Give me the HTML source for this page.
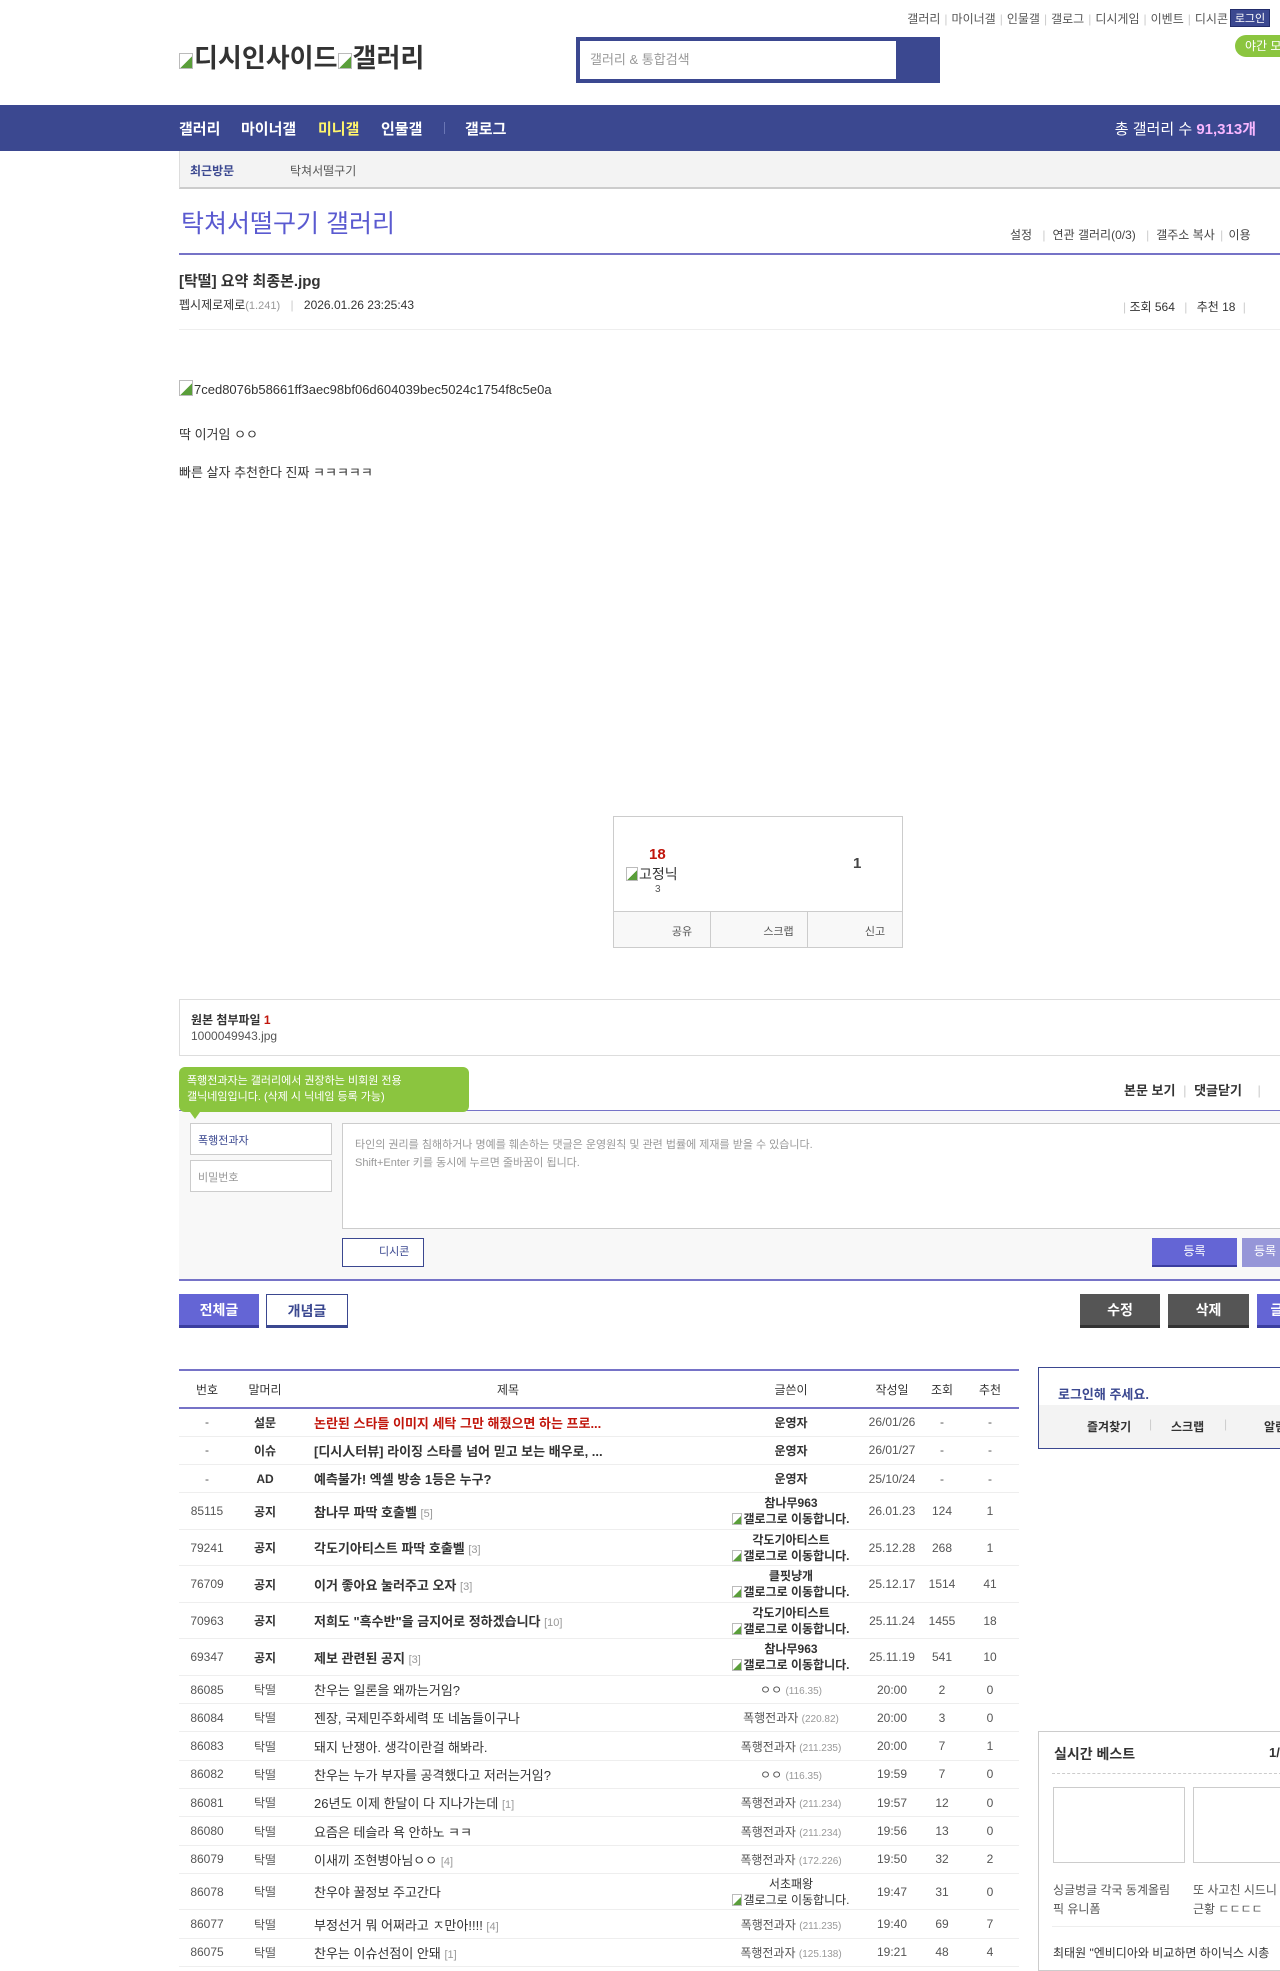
<!DOCTYPE html>
<html><head><meta charset="utf-8">
<style>
*{margin:0;padding:0;box-sizing:border-box}
body{width:1280px;height:1959px;overflow:hidden;background:#fff;font-family:"Liberation Sans","Noto Sans CJK KR",sans-serif;color:#333;position:relative;font-size:13px}
.a{position:absolute;white-space:nowrap}
.bi{display:inline-block;width:14px;height:16px;border:1px solid #bbb;background:linear-gradient(135deg,#fff 55%,#5a9e3a 56%);vertical-align:-2px;margin-right:1px}
.toplinks{font-size:12px;color:#555}
.toplinks span{color:#ccc;margin:0 4px}
.nav{background:#3b4890;top:105px;left:0;width:1280px;height:46px}
.nav b{position:absolute;top:13px;color:#fff;font-size:15px}
table{border-collapse:collapse}
.lst{position:absolute;left:179px;top:1369px;width:840px;border-top:2px solid #7673c7;font-size:12px}
.lst td,.lst th{text-align:center;color:#555;border-bottom:1px solid #eee;padding:0}
.lst th{height:38px;border-bottom:2px solid #7673c7;font-weight:normal;color:#333}
.lst td.t{text-align:left;padding-left:19px;font-size:13px;color:#333}
.lst tr.n td{height:28.3px}
.lst tr.k td{height:36.5px}
.lst td.t b{color:#333}
.lst .rd{color:#c1150b!important}
.ip{color:#999;font-size:10px}
.rp{color:#999;font-size:11px}
.two{line-height:16px;font-size:12px}
.two b{color:#333}
.btn{position:absolute;height:34px;line-height:32px;text-align:center;font-size:14px;font-weight:bold}
</style></head><body>

<div class="a toplinks" style="top:10px;right:52px">갤러리<span>|</span>마이너갤<span>|</span>인물갤<span>|</span>갤로그<span>|</span>디시게임<span>|</span>이벤트<span>|</span>디시콘</div>
<div class="a" style="top:9px;left:1230px;width:40px;height:18px;background:#3b4890;color:#fff;font-size:11px;text-align:center;line-height:18px;border:1px solid #222c6a">로그인</div>
<div class="a" style="top:35px;left:1235px;width:60px;height:22px;background:#8bc53f;border-radius:11px;color:#fff;font-size:12px;line-height:22px;padding-left:10px">야간 모드</div>

<div class="a" style="top:38px;left:179px;font-size:26px;font-weight:bold;color:#333"><span class="bi"></span>디시인사이드<span class="bi"></span>갤러리</div>

<div class="a" style="top:37px;left:576px;width:364px;height:46px;background:#3b4890"></div>
<div class="a" style="top:41px;left:580px;width:316px;height:38px;background:#fff;color:#999;font-size:13px;line-height:38px;padding-left:10px">갤러리 &amp; 통합검색</div>

<div class="a nav">
<b style="left:179px">갤러리</b><b style="left:241px">마이너갤</b><b style="left:318px;color:#fff56b">미니갤</b><b style="left:381px">인물갤</b>
<span style="position:absolute;left:444px;top:17px;width:1px;height:12px;background:#6a76b5"></span>
<b style="left:465px">갤로그</b>
<span style="position:absolute;right:24px;top:13px;color:#fff;font-size:15px">총 갤러리 수 <b style="position:static;color:#f7b6ff">91,313개</b></span>
</div>

<div class="a" style="top:151px;left:179px;width:1101px;height:38px;background:#f3f3f3;border-left:1px solid #ddd;border-bottom:2px solid #ccc"></div>
<div class="a" style="top:162px;left:190px;font-size:12px;font-weight:bold;color:#3b4890">최근방문</div>
<div class="a" style="top:162px;left:290px;font-size:12px;color:#555">탁쳐서떨구기</div>

<div class="a" style="top:204px;left:181px;font-size:25px;color:#5a5ad0">탁쳐서떨구기 갤러리</div>
<div class="a" style="top:226px;left:1010px;font-size:12px;color:#444">설정 <span style="color:#ccc;margin:0 7px">|</span>연관 갤러리(0/3) <span style="color:#ccc;margin:0 7px">|</span>갤주소 복사 <span style="color:#ccc;margin:0 2px">|</span> 이용</div>
<div class="a" style="top:253px;left:179px;width:1101px;height:2px;background:#7673c7"></div>

<div class="a" style="top:270px;left:179px;font-size:15px;font-weight:bold;color:#333">[탁떨] 요약 최종본.jpg</div>
<div class="a" style="top:296px;left:179px;font-size:12px;color:#333">펩시제로제로<span style="color:#999;font-size:11px">(1.241)</span> <span style="color:#ccc;margin:0 7px">|</span> 2026.01.26 23:25:43</div>
<div class="a" style="top:298px;left:1123px;font-size:12px;color:#333"><span style="color:#ccc">|</span> 조회 564 <span style="color:#ccc;margin:0 6px">|</span> 추천 18 <span style="color:#ccc;margin:0 4px">|</span></div>
<div class="a" style="top:294px;left:1304px;width:30px;height:24px;border:1px solid #ccc;border-radius:12px"></div>
<div class="a" style="top:329px;left:179px;width:1101px;height:1px;background:#eee"></div>

<div class="a" style="top:380px;left:179px;font-size:13px;color:#333"><span class="bi"></span>7ced8076b58661ff3aec98bf06d604039bec5024c1754f8c5e0a</div>
<div class="a" style="top:424px;left:179px;font-size:13px">딱 이거임 ㅇㅇ</div>
<div class="a" style="top:462px;left:179px;font-size:13px">빠른 살자 추천한다 진짜 ㅋㅋㅋㅋㅋ</div>

<div class="a" style="top:816px;left:613px;width:290px;height:132px;border:1px solid #ccc"></div>
<div class="a" style="top:911px;left:613px;width:290px;height:37px;border:1px solid #ccc;background:#f8f8f8;font-size:11px;color:#555">
<span style="position:absolute;left:0;width:96px;top:11px;text-align:center;padding-left:40px">공유</span>
<span style="position:absolute;left:96px;top:0;height:35px;width:1px;background:#ccc"></span>
<span style="position:absolute;left:96px;width:97px;top:11px;text-align:center;padding-left:40px">스크랩</span>
<span style="position:absolute;left:193px;top:0;height:35px;width:1px;background:#ccc"></span>
<span style="position:absolute;left:193px;width:96px;top:11px;text-align:center;padding-left:40px">신고</span>
</div>
<div class="a" style="top:846px;left:649px;font-size:15px;font-weight:bold;color:#c1150b">18</div>
<div class="a" style="top:864px;left:626px;font-size:14px;color:#333"><span class="bi" style="width:12px;height:14px"></span>고정닉</div>
<div class="a" style="top:884px;left:655px;font-size:10px;color:#555">3</div>
<div class="a" style="top:855px;left:853px;font-size:15px;font-weight:bold;color:#444">1</div>

<div class="a" style="top:999px;left:179px;width:1101px;height:57px;border:1px solid #ddd;border-right:none"></div>
<div class="a" style="top:1011px;left:191px;font-size:12px;font-weight:bold;color:#333">원본 첨부파일 <span style="color:#c1150b">1</span></div>
<div class="a" style="top:1029px;left:191px;font-size:12px;color:#555">1000049943.jpg</div>

<div class="a" style="top:1110px;left:179px;width:1101px;height:2px;background:#7673c7"></div>
<div class="a" style="top:1111px;left:179px;width:1101px;height:169px;background:#f8f8f8"></div>
<div class="a" style="top:1067px;left:179px;width:290px;height:45px;background:#8bc53f;border-radius:6px;color:#fff;font-size:11px;line-height:16px;padding:6px 0 0 8px">폭행전과자는 갤러리에서 권장하는 비회원 전용<br>갤닉네임입니다. (삭제 시 닉네임 등록 가능)</div>
<div class="a" style="top:1112px;left:190px;border-left:5px solid transparent;border-right:5px solid transparent;border-top:7px solid #8bc53f;width:0;height:0"></div>
<div class="a" style="top:1080px;left:1124px;font-size:13px;font-weight:bold;color:#333">본문 보기 <span style="color:#ccc;font-weight:normal;margin:0 4px">|</span> 댓글닫기 <span style="color:#ccc;font-weight:normal;margin:0 12px">|</span></div>
<div class="a" style="top:1123px;left:190px;width:142px;height:32px;border:1px solid #ccc;background:#fff;font-size:11px;color:#3b4890;padding:8px 7px">폭행전과자</div>
<div class="a" style="top:1160px;left:190px;width:142px;height:32px;border:1px solid #ccc;background:#fff;font-size:11px;color:#999;padding:8px 7px">비밀번호</div>
<div class="a" style="top:1123px;left:342px;width:960px;height:106px;border:1px solid #ccc;background:#fff;font-size:11px;color:#999;padding:12px 12px;line-height:18px">타인의 권리를 침해하거나 명예를 훼손하는 댓글은 운영원칙 및 관련 법률에 제재를 받을 수 있습니다.<br>Shift+Enter 키를 동시에 누르면 줄바꿈이 됩니다.</div>
<div class="a" style="top:1238px;left:342px;width:82px;height:29px;border:1px solid #3b4890;background:#fff;font-size:11px;color:#3b4890;line-height:27px;padding-left:36px">디시콘</div>
<div class="a" style="top:1238px;left:1152px;width:85px;height:29px;background:#6465d5;border-bottom:2px solid #3b3ea0;color:#fff;font-size:12px;text-align:center;line-height:27px">등록</div>
<div class="a" style="top:1238px;left:1242px;width:60px;height:29px;background:#9696d8;color:#fff;font-size:12px;line-height:27px;padding-left:12px">등록</div>
<div class="a" style="top:1279px;left:179px;width:1101px;height:2px;background:#7673c7"></div>

<div class="btn" style="top:1294px;left:179px;width:80px;background:#6465d5;color:#fff;border-bottom:3px solid #3b3ea0">전체글</div>
<div class="btn" style="top:1294px;left:266px;width:82px;background:#fff;color:#3b4890;border:1px solid #3b4890;border-bottom:3px solid #3b4890">개념글</div>
<div class="btn" style="top:1294px;left:1080px;width:80px;background:#555;color:#fff;border-bottom:3px solid #333">수정</div>
<div class="btn" style="top:1294px;left:1168px;width:81px;background:#555;color:#fff;border-bottom:3px solid #333">삭제</div>
<div class="btn" style="top:1294px;left:1257px;width:40px;background:#6465d5;color:#fff;border-bottom:3px solid #3b3ea0">글</div>

<table class="lst">
<colgroup><col style="width:56px"><col style="width:60px"><col style="width:426px"><col style="width:140px"><col style="width:62px"><col style="width:38px"><col style="width:58px"></colgroup>
<tr><th>번호</th><th>말머리</th><th>제목</th><th>글쓴이</th><th>작성일</th><th>조회</th><th>추천</th></tr>
<tr class="n"><td>-</td><td><b style="color:#333">설문</b></td><td class="t"><b class="rd">논란된 스타들 이미지 세탁 그만 해줬으면 하는 프로...</b></td><td><b style="color:#333">운영자</b></td><td>26/01/26</td><td>-</td><td>-</td></tr>
<tr class="n"><td>-</td><td><b style="color:#333">이슈</b></td><td class="t"><b>[디시人터뷰] 라이징 스타를 넘어 믿고 보는 배우로, ...</b></td><td><b style="color:#333">운영자</b></td><td>26/01/27</td><td>-</td><td>-</td></tr>
<tr class="n"><td>-</td><td><b style="color:#333">AD</b></td><td class="t"><b>예측불가! 엑셀 방송 1등은 누구?</b></td><td><b style="color:#333">운영자</b></td><td>25/10/24</td><td>-</td><td>-</td></tr>
<tr class="k"><td>85115</td><td><b style="color:#333">공지</b></td><td class="t"><b>참나무 파딱 호출벨</b> <span class="rp">[5]</span></td><td class="two"><b>참나무963</b><br><b><span class="bi" style="width:10px;height:12px"></span>갤로그로 이동합니다.</b></td><td>26.01.23</td><td>124</td><td>1</td></tr>
<tr class="k"><td>79241</td><td><b style="color:#333">공지</b></td><td class="t"><b>각도기아티스트 파딱 호출벨</b> <span class="rp">[3]</span></td><td class="two"><b>각도기아티스트</b><br><b><span class="bi" style="width:10px;height:12px"></span>갤로그로 이동합니다.</b></td><td>25.12.28</td><td>268</td><td>1</td></tr>
<tr class="k"><td>76709</td><td><b style="color:#333">공지</b></td><td class="t"><b>이거 좋아요 눌러주고 오자</b> <span class="rp">[3]</span></td><td class="two"><b>클핏냥개</b><br><b><span class="bi" style="width:10px;height:12px"></span>갤로그로 이동합니다.</b></td><td>25.12.17</td><td>1514</td><td>41</td></tr>
<tr class="k"><td>70963</td><td><b style="color:#333">공지</b></td><td class="t"><b>저희도 "흑수반"을 금지어로 정하겠습니다</b> <span class="rp">[10]</span></td><td class="two"><b>각도기아티스트</b><br><b><span class="bi" style="width:10px;height:12px"></span>갤로그로 이동합니다.</b></td><td>25.11.24</td><td>1455</td><td>18</td></tr>
<tr class="k"><td>69347</td><td><b style="color:#333">공지</b></td><td class="t"><b>제보 관련된 공지</b> <span class="rp">[3]</span></td><td class="two"><b>참나무963</b><br><b><span class="bi" style="width:10px;height:12px"></span>갤로그로 이동합니다.</b></td><td>25.11.19</td><td>541</td><td>10</td></tr>
<tr class="n"><td>86085</td><td>탁떨</td><td class="t">찬우는 일론을 왜까는거임?</td><td>ㅇㅇ <span class="ip">(116.35)</span></td><td>20:00</td><td>2</td><td>0</td></tr>
<tr class="n"><td>86084</td><td>탁떨</td><td class="t">젠장, 국제민주화세력 또 네놈들이구나</td><td>폭행전과자 <span class="ip">(220.82)</span></td><td>20:00</td><td>3</td><td>0</td></tr>
<tr class="n"><td>86083</td><td>탁떨</td><td class="t">돼지 난쟁아. 생각이란걸 해봐라.</td><td>폭행전과자 <span class="ip">(211.235)</span></td><td>20:00</td><td>7</td><td>1</td></tr>
<tr class="n"><td>86082</td><td>탁떨</td><td class="t">찬우는 누가 부자를 공격했다고 저러는거임?</td><td>ㅇㅇ <span class="ip">(116.35)</span></td><td>19:59</td><td>7</td><td>0</td></tr>
<tr class="n"><td>86081</td><td>탁떨</td><td class="t">26년도 이제 한달이 다 지나가는데 <span class="rp">[1]</span></td><td>폭행전과자 <span class="ip">(211.234)</span></td><td>19:57</td><td>12</td><td>0</td></tr>
<tr class="n"><td>86080</td><td>탁떨</td><td class="t">요즘은 테슬라 욕 안하노 ㅋㅋ</td><td>폭행전과자 <span class="ip">(211.234)</span></td><td>19:56</td><td>13</td><td>0</td></tr>
<tr class="n"><td>86079</td><td>탁떨</td><td class="t">이새끼 조현병아님ㅇㅇ <span class="rp">[4]</span></td><td>폭행전과자 <span class="ip">(172.226)</span></td><td>19:50</td><td>32</td><td>2</td></tr>
<tr class="k"><td>86078</td><td>탁떨</td><td class="t">찬우야 꿀정보 주고간다</td><td class="two" style="color:#333">서초패왕<br><span class="bi" style="width:10px;height:12px"></span>갤로그로 이동합니다.</td><td>19:47</td><td>31</td><td>0</td></tr>
<tr class="n"><td>86077</td><td>탁떨</td><td class="t">부정선거 뭐 어쩌라고 ㅈ만아!!!! <span class="rp">[4]</span></td><td>폭행전과자 <span class="ip">(211.235)</span></td><td>19:40</td><td>69</td><td>7</td></tr>
<tr class="n"><td>86075</td><td>탁떨</td><td class="t">찬우는 이슈선점이 안돼 <span class="rp">[1]</span></td><td>폭행전과자 <span class="ip">(125.138)</span></td><td>19:21</td><td>48</td><td>4</td></tr>
</table>

<div class="a" style="top:1367px;left:1038px;width:260px;height:82px;border:1px solid #3b4890"></div>
<div class="a" style="top:1384px;left:1058px;font-size:13px;font-weight:bold;color:#3b4890">로그인해 주세요.</div>
<div class="a" style="top:1405px;left:1039px;width:241px;height:43px;background:#f3f3f3;font-size:12px;font-weight:bold;color:#333"><span style="position:absolute;left:48px;top:13px">즐겨찾기</span><span style="position:absolute;left:110px;top:12px;color:#ccc;font-weight:normal">|</span><span style="position:absolute;left:132px;top:13px">스크랩</span><span style="position:absolute;left:185px;top:12px;color:#ccc;font-weight:normal">|</span><span style="position:absolute;left:225px;top:13px">알림</span></div>

<div class="a" style="top:1731px;left:1038px;width:260px;height:240px;border:1px solid #ccc"></div>
<div class="a" style="top:1744px;left:1054px;font-size:14px;font-weight:bold;color:#333">실시간 베스트</div>
<div class="a" style="top:1745px;left:1269px;font-size:13px;font-weight:bold;color:#333">1/</div>
<div class="a" style="left:1052px;top:1773px;width:230px;border-top:1px dashed #ccc"></div>
<div class="a" style="top:1787px;left:1053px;width:132px;height:76px;border:1px solid #ccc"></div>
<div class="a" style="top:1787px;left:1193px;width:100px;height:76px;border:1px solid #ccc"></div>
<div class="a" style="top:1881px;left:1053px;font-size:12px;color:#555;line-height:19px">싱글벙글 각국 동계올림<br>픽 유니폼</div>
<div class="a" style="top:1881px;left:1193px;font-size:12px;color:#555;line-height:19px">또 사고친 시드니<br>근황 ㄷㄷㄷㄷ</div>
<div class="a" style="top:1926px;left:1052px;width:230px;border-top:1px solid #eee"></div>
<div class="a" style="top:1944px;left:1053px;font-size:12px;color:#333">최태원 "엔비디아와 비교하면 하이닉스 시총</div>
</body></html>
